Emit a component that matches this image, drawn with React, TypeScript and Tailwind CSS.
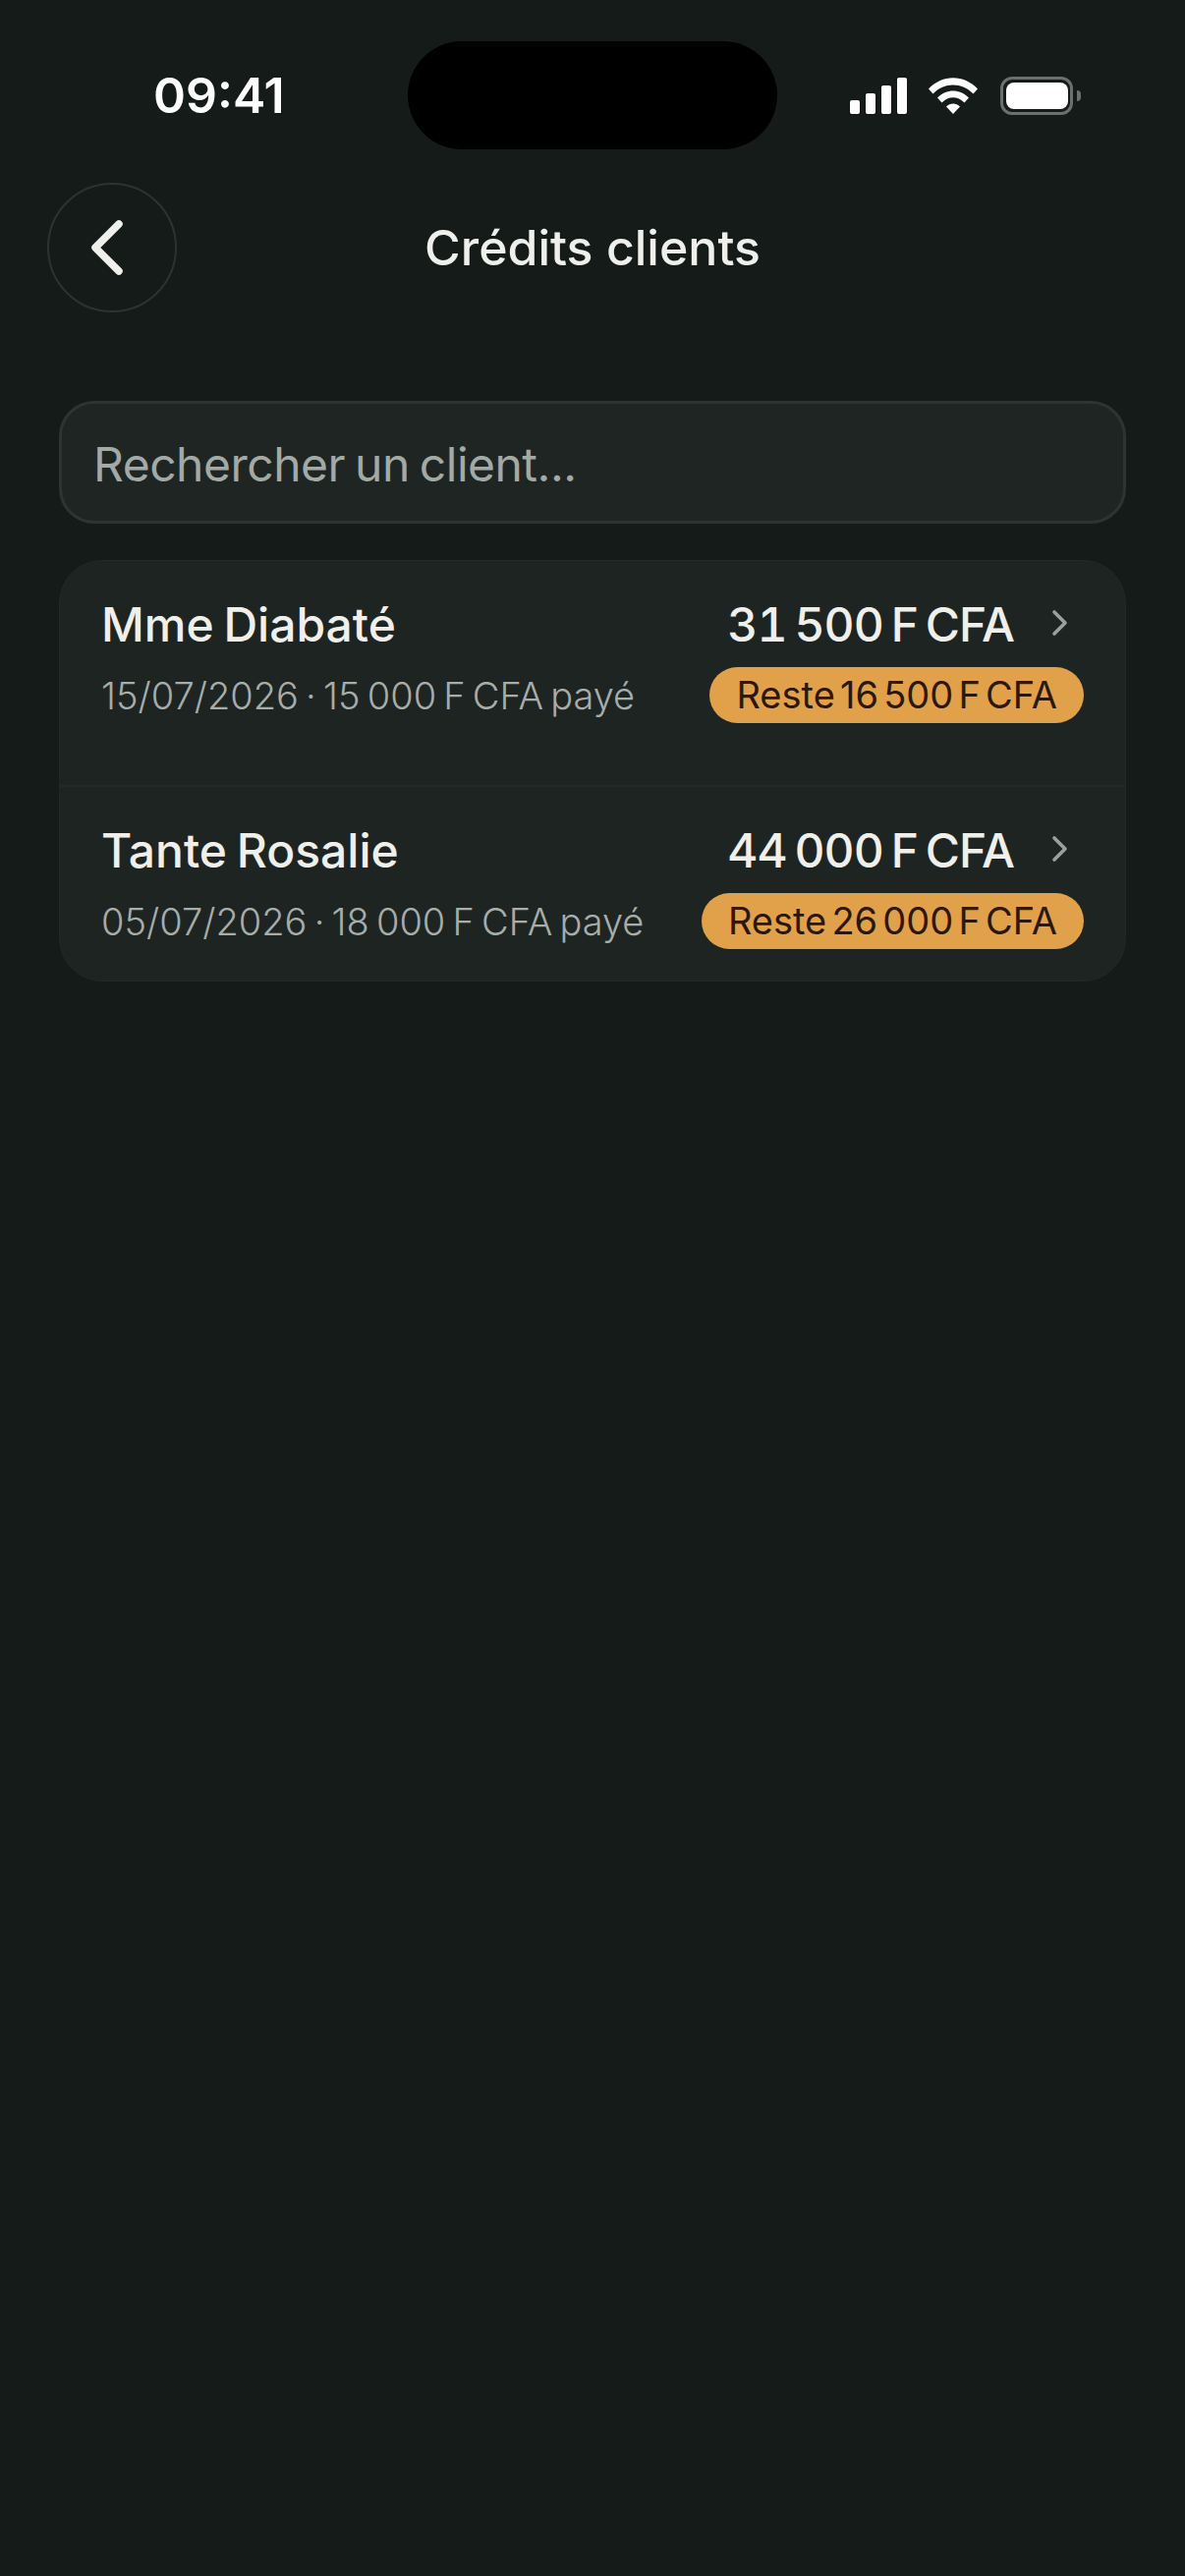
const clients = [
  {
    name: "Mme Diabaté",
    meta: "15/07/2026 · 15 000 F CFA payé",
    total: "31 500 F CFA",
    left: "Reste 16 500 F CFA",
    rowClass: "h-[230px] border-b-2 border-[#232a28]",
  },
  {
    name: "Tante Rosalie",
    meta: "05/07/2026 · 18 000 F CFA payé",
    total: "44 000 F CFA",
    left: "Reste 26 000 F CFA",
    rowClass: "h-[197px]",
  },
];

function StatusIcons() {
  return (
    <div className="flex items-center pl-[74px]">
      <div className="flex h-[37px] items-end gap-[6px]">
        <span className="h-[14px] w-[10px] rounded-[2px] bg-white" />
        <span className="h-[21px] w-[10px] rounded-[2px] bg-white" />
        <span className="h-[29px] w-[10px] rounded-[2px] bg-white" />
        <span className="h-[37px] w-[10px] rounded-[2px] bg-white" />
      </div>
      <svg className="ml-[22px]" width="50" height="37" viewBox="0 0 50 37" fill="white">
        <path d="M0 11.5C14-3.5 36-3.5 50 11.5L45.5 16.5C34 4.5 16 4.5 4.5 16.5Z" />
        <path d="M9 20.5C18 11 32 11 41 20.5L36.5 25.5C29.5 18.5 20.5 18.5 13.5 25.5Z" />
        <path d="M18 29.5C22 25.5 28 25.5 32 29.5L25 37Z" />
      </svg>
      <div className="ml-[23px] flex h-[39px] w-[74px] items-center justify-center rounded-[12px] border-[3px] border-[#6b6f6e]">
        <span className="h-[27px] w-[63px] rounded-[8px] bg-white" />
      </div>
      <span className="ml-[4px] h-[11px] w-[4px] rounded-r-full bg-[#6b6f6e]" />
    </div>
  );
}

export default function App() {
  return (
    <div className="h-[2622px] w-[1206px] overflow-hidden bg-[#151b19] font-['Inter',sans-serif] text-[#efefeb]">
      <div className="flex items-center pt-[42px]">
        <div className="w-[415px] pl-[156px] text-[50px] leading-[110px] font-semibold text-white">09:41</div>
        <div className="h-[110px] w-[376px] rounded-[55px] bg-black" />
        <StatusIcons />
      </div>

      <div className="mt-[34px] grid grid-cols-[132px_1fr_132px] items-center px-[48px]">
        <button className="flex h-[132px] w-[132px] items-center justify-center rounded-full border-2 border-[#2c3331]">
          <svg width="44" height="60" viewBox="0 0 44 60" fill="none" stroke="#efefeb" strokeWidth="7.5" strokeLinecap="round" strokeLinejoin="round" className="-ml-[8px]">
            <path d="M33 6L9 30L33 54" />
          </svg>
        </button>
        <h1 className="text-center text-[50px] leading-[64px] font-medium">Crédits clients</h1>
      </div>

      <div className="mx-[60px] mt-[90px] flex h-[125px] items-center rounded-[36px] border-[3px] border-[#2d3533] bg-[#1e2523] pt-[4px] pl-[32px] text-[48px] tracking-[-0.5px] text-[#a3aaa6] [word-spacing:-3px]">
        Rechercher un client...
      </div>

      <div className="mx-[60px] mt-[37px] rounded-[44px] border border-[#222927] bg-[#1e2422]">
        {clients.map((c) => (
          <div key={c.name} className={`flex justify-between pt-[33px] pr-[42px] pl-[42px] ${c.rowClass}`}>
            <div>
              <div className="text-[48px] leading-[64px] font-[550] [word-spacing:-3px]">{c.name}</div>
              <div className="mt-[15px] text-[38px] leading-[50px] font-light text-[#a7ada9] [word-spacing:-3.5px]">{c.meta}</div>
            </div>
            <div className="flex flex-col items-end">
              <div className="flex h-[64px] items-center">
                <span className="text-[48px] font-medium tracking-[-1px] tabular-nums [word-spacing:-4px]">{c.total}</span>
                <svg width="17" height="28" viewBox="0 0 17 28" fill="none" stroke="#9aa09d" strokeWidth="3.6" strokeLinecap="round" strokeLinejoin="round" className="-mt-[4px] mr-[16px] ml-[38px]">
                  <path d="M3 3L14 14L3 25" />
                </svg>
              </div>
              <div className="mt-[11px] flex h-[57px] items-center rounded-full bg-[#e0a14a] px-[27px] text-[38px] text-[#2c1708] [word-spacing:-5.5px]">
                {c.left}
              </div>
            </div>
          </div>
        ))}
      </div>
    </div>
  );
}
